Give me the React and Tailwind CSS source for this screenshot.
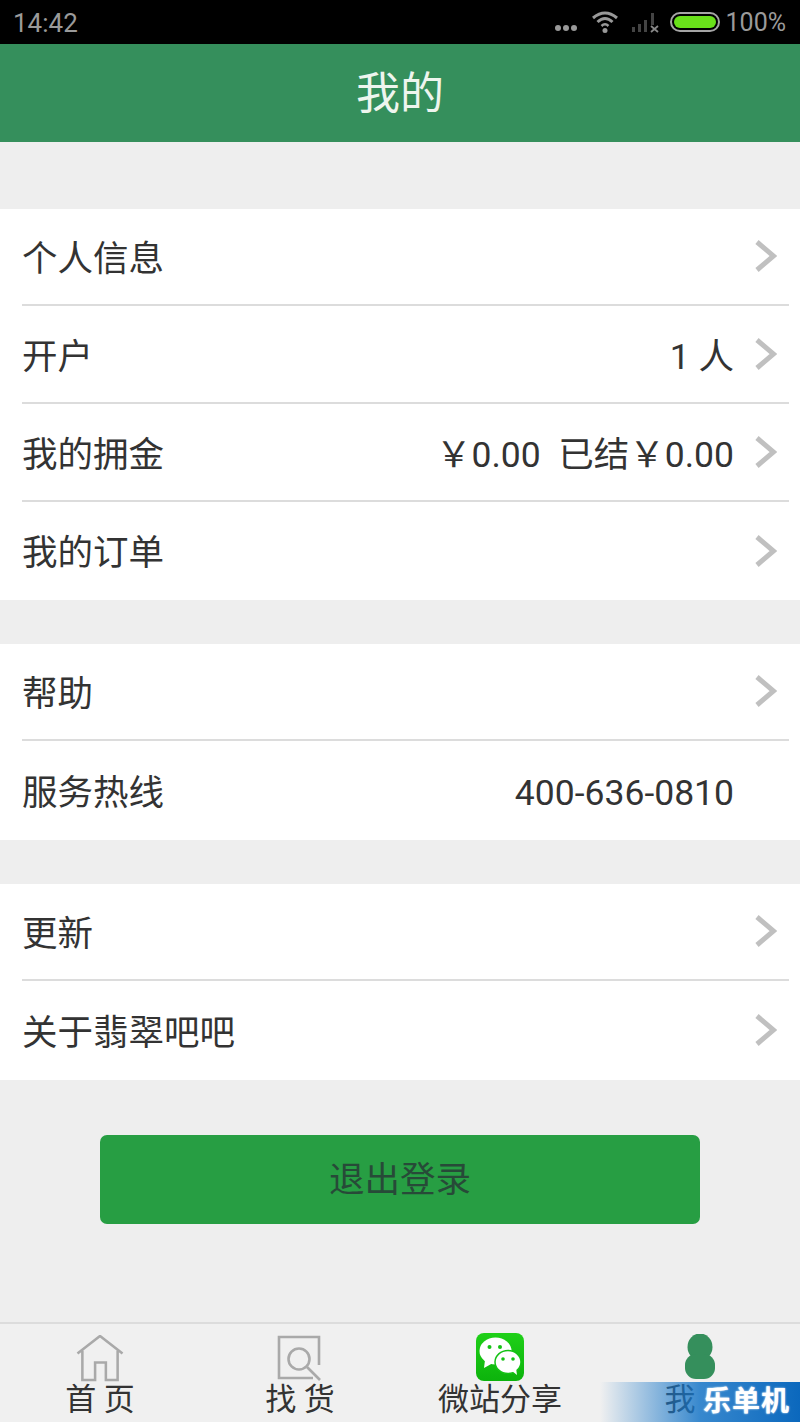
import React from "react"

const FONT = { fontFamily: "Roboto, 'Noto Sans CJK SC', sans-serif" }

function Chevron({ hidden }) {
  return (
    <svg width="22" height="32" viewBox="0 0 22 32" className={`mb-[2px] ${hidden ? "invisible" : ""}`}>
      <path d="M2 2 L18.5 16 L2 30" fill="none" stroke="#c0c0c0" strokeWidth="5" />
    </svg>
  )
}

function Row({ title, value, noArrow, last, short }) {
  const pad = last ? "pt-[3px]" : "pt-[5px]"
  return (
    <div className="pl-[22px] pr-[11px]">
      <div className={`flex items-center justify-between pr-[12px] ${last ? (short ? "h-[97px]" : "h-[98px]") : "h-[95px]"}`}>
        <span className={`text-[35.5px] leading-[50px] text-[#333] ${pad}`}>{title}</span>
        <div className="flex items-center gap-[21px]">
          {value && <span className={`text-[35.5px] leading-[50px] text-[#333] whitespace-pre ${pad}`}>{value}</span>}
          <Chevron hidden={noArrow} />
        </div>
      </div>
      {!last && <div className="h-[2px] mb-[1px] bg-[#dcdcdc]" />}
    </div>
  )
}

function Group({ children }) {
  return <div className="bg-white">{children}</div>
}

function Tab({ label, labelClass, children }) {
  return (
    <div className="flex-1 flex flex-col items-center">
      <div className="h-[50px] mt-[8px] flex items-center justify-center">{children}</div>
      <span className={`text-[31px] leading-[36px] whitespace-pre text-[#333] ${labelClass || ""}`}>{label}</span>
    </div>
  )
}

function StatusBar() {
  return (
    <div className="h-[44px] bg-black flex items-center justify-between pl-[13px] pr-[14px] text-[25px] text-[#9a9a9a]">
      <span className="text-[26px] pt-[2px]">14:42</span>
      <div className="flex items-center">
        <svg width="24" height="8" viewBox="0 0 24 8" className="mt-[12px] mr-[13px]">
          <circle cx="4" cy="4" r="3" fill="#999" />
          <circle cx="12" cy="4" r="3" fill="#999" />
          <circle cx="20" cy="4" r="3" fill="#999" />
        </svg>
        <svg width="28" height="22" viewBox="0 0 28 22" className="mr-[12px]">
          <path d="M2 7 Q14 -3 26 7" fill="none" stroke="#999" strokeWidth="3" />
          <path d="M6.5 11 Q14 4 21.5 11" fill="none" stroke="#999" strokeWidth="3" />
          <path d="M10.5 15 Q14 11.5 17.5 15" fill="none" stroke="#999" strokeWidth="2.5" />
          <circle cx="14" cy="19.5" r="2.5" fill="#999" />
        </svg>
        <svg width="30" height="22" viewBox="0 0 30 22" className="mr-[9px]">
          <rect x="1" y="16" width="3" height="5" fill="#444" />
          <rect x="7" y="13" width="3" height="8" fill="#444" />
          <rect x="13" y="9" width="3" height="12" fill="#444" />
          <rect x="20" y="2" width="3" height="12" fill="#444" />
          <path d="M20 15 L27 21 M27 15 L20 21" stroke="#888" strokeWidth="1.8" />
        </svg>
        <div className="w-[50px] h-[20px] rounded-full border-2 border-[#a5a5a5] p-[2px] mr-[6px]">
          <div className="h-full rounded-full bg-[#69e01a]" />
        </div>
        <span className="pt-[2px]">100%</span>
      </div>
    </div>
  )
}

export default function App() {
  return (
    <div className="w-[800px] h-[1422px] bg-[#eeeeee] flex flex-col relative overflow-hidden" style={FONT}>
      <StatusBar />
      <div className="h-[98px] bg-[#358f5c] flex items-center justify-center text-[44px] pt-[1px] text-[#eef5ee]">我的</div>

      <div className="mt-[67px]">
        <Group>
          <Row title="个人信息" />
          <Row title="开户" value="1 人" />
          <Row title="我的拥金" value="￥0.00  已结￥0.00" />
          <Row title="我的订单" last short />
        </Group>
      </div>
      <div className="mt-[44px]">
        <Group>
          <Row title="帮助" />
          <Row title="服务热线" value="400-636-0810" noArrow last />
        </Group>
      </div>
      <div className="mt-[44px]">
        <Group>
          <Row title="更新" />
          <Row title="关于翡翠吧吧" last />
        </Group>
      </div>

      <div className="mx-[100px] mt-[55px] h-[89px] rounded-[7px] bg-[#279e43] flex items-center justify-center pt-[3px] text-[35.5px] text-[#274a38]">
        退出登录
      </div>

      <div className="mt-auto h-[100px] border-t-2 border-[#dcdcdc] bg-[#f0f0f0] flex">
        <Tab label="首 页">
          <svg width="50" height="47" viewBox="0 0 50 48" className="mt-[2px]">
            <path d="M2 19 L25 1 L48 19 M7 16 V46 H20 V28 H31 V46 H43 V16" fill="none" stroke="#a9a9a9" strokeWidth="2.6" />
          </svg>
        </Tab>
        <Tab label="找 货">
          <svg width="46" height="46" viewBox="0 0 46 46" className="mt-[1px]">
            <path d="M42 30 V2 H2 V43 H36" fill="none" stroke="#a9a9a9" strokeWidth="2.6" />
            <circle cx="22" cy="24" r="10.5" fill="none" stroke="#a9a9a9" strokeWidth="2.6" />
            <path d="M30 32 L43 45" fill="none" stroke="#a9a9a9" strokeWidth="2.6" />
          </svg>
        </Tab>
        <Tab label="微站分享">
          <svg width="50" height="50" viewBox="0 0 50 50">
            <defs>
              <linearGradient id="wx" x1="0" y1="0" x2="0" y2="1">
                <stop offset="0" stopColor="#1fd018" />
                <stop offset="1" stopColor="#0cb30c" />
              </linearGradient>
            </defs>
            <rect x="1" y="1" width="48" height="48" rx="8" fill="url(#wx)" />
            <ellipse cx="20.5" cy="19" rx="16" ry="13.5" fill="#fff" />
            <path d="M10 28 L9 36 L18 31 Z" fill="#fff" />
            <ellipse cx="33" cy="30" rx="13" ry="11.5" fill="#fff" stroke="#14c214" strokeWidth="1.5" />
            <path d="M37 39 L42 43 L41 36 Z" fill="#fff" />
            <circle cx="14.5" cy="15" r="2" fill="#14c214" />
            <circle cx="25" cy="15" r="2" fill="#14c214" />
            <circle cx="28" cy="27" r="1.8" fill="#14c214" />
            <circle cx="38" cy="27" r="1.8" fill="#14c214" />
          </svg>
        </Tab>
        <Tab label="我" labelClass="mr-[40px]">
          <svg width="32" height="46" viewBox="0 0 32 46">
            <ellipse cx="16" cy="13" rx="12.5" ry="13.5" fill="#358f5c" />
            <rect x="1" y="20" width="30" height="25" rx="11" fill="#358f5c" />
          </svg>
        </Tab>
      </div>

      {/* watermark */}
      <div className="absolute right-0 bottom-0 w-[200px] h-[40px] bg-gradient-to-r from-[#1b7fd0]/0 via-[#1776c8]/85 via-[50%] to-[#0b68bd] flex items-center justify-end pr-[10px]">
        <span className="text-[28px] font-bold text-white tracking-[1px] [text-shadow:0_0_2px_#ffffff]">乐单机</span>
      </div>
    </div>
  )
}
